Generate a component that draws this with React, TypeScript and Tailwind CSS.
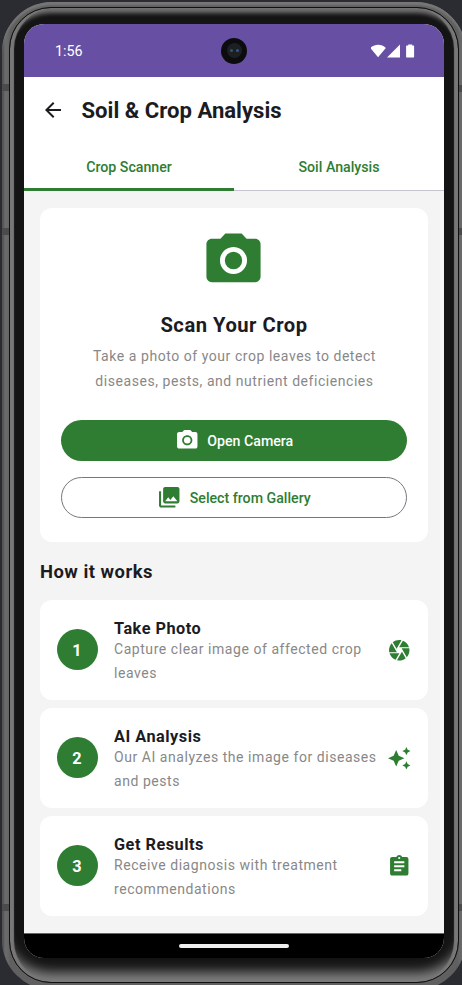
import type { ReactNode } from "react";

const CAMERA_BODY =
  "M9 2L7.17 4H4c-1.1 0-2 .9-2 2v12c0 1.1.9 2 2 2h16c1.1 0 2-.9 2-2V6c0-1.1-.9-2-2-2h-3.17L15 2H9zm3 15c-2.76 0-5-2.24-5-5s2.24-5 5-5 5 2.24 5 5-2.24 5-5 5z";

type IconProps = { className?: string; children: ReactNode };

function Icon({ className = "", children }: IconProps) {
  return (
    <svg viewBox="0 0 24 24" fill="currentColor" className={`shrink-0 ${className}`}>
      {children}
    </svg>
  );
}

function Camera({ className }: { className: string }) {
  return (
    <Icon className={className}>
      <circle cx="12" cy="12" r="3.2" />
      <path d={CAMERA_BODY} />
    </Icon>
  );
}

function StatusBar() {
  return (
    <div className="flex h-[53px] shrink-0 items-center justify-between bg-[#6750a4] pl-[31px] pr-[28px] text-white">
      <span className="w-[42px] pt-[2px] text-[14.3px] leading-none">1:56</span>
      <div className="flex size-[26px] items-center justify-center rounded-full bg-[#0c0c0e]">
        <div className="flex size-[15px] items-center justify-center gap-[3px] rounded-full bg-[#1d1f23]">
          <span className="size-[3px] rounded-full bg-[#2c5960]" />
          <span className="size-[3px] rounded-full bg-[#35558d]" />
        </div>
      </div>
      <svg viewBox="0 0 45 14" className="h-[14px] w-[45px]" fill="white">
        <path d="M-.7 4C3.300-.3 10.800-.3 14.800 4L7.100 13.200z" />
        <path d="M16 13.500L29 .5v13z" />
        <path d="M37.200 1.500V.5h4v1h1.300q.6 0 .6.700v10.600q0 .7-.6.700h-6.800q-.6 0-.6-.7V2.200q0-.7.6-.7z" />
      </svg>
    </div>
  );
}

function AppBar() {
  return (
    <header className="flex h-[67px] shrink-0 items-center bg-white pl-[17px] text-[#1c1b1f]">
      <Icon className="mb-[2px] size-[24px]">
        <path d="M20 11H7.830l5.590-5.590L12 4l-8 8 8 8 1.410-1.410L7.830 13H20v-2z" />
      </Icon>
      <h1 className="ml-[16.500px] whitespace-nowrap text-[22.100px] font-bold leading-none">Soil &amp; Crop Analysis</h1>
    </header>
  );
}

function Tabs() {
  return (
    <nav className="flex h-[47px] shrink-0 bg-white text-[14.200px] font-medium text-[#2e7d32]">
      <div className="flex flex-1 items-center justify-center border-b-[3px] border-[#2e7d32] pt-[4px]">Crop Scanner</div>
      <div className="flex flex-1 items-center justify-center border-b border-[#c8c5d0] pt-[2px]">Soil Analysis</div>
    </nav>
  );
}

function ScanCard() {
  return (
    <section className="flex h-[334px] shrink-0 flex-col items-center rounded-[12px] bg-white px-[21px] pt-[20px]">
      <Camera className="mr-px size-[65px] text-[#2e7d32]" />
      <h2 className="mt-[19px] text-[20.200px] font-bold leading-[26px] tracking-[0.5px] text-[#1c1b1f]">Scan Your Crop</h2>
      <p className="mt-[6px] whitespace-nowrap pl-px text-center text-[14px] leading-[24.500px] tracking-[0.55px] text-[#888888]">
        Take a photo of your crop leaves to detect
        <br />
        diseases, pests, and nutrient deficiencies
      </p>
      <button className="mt-[27px] flex h-[41px] w-full shrink-0 items-center justify-center gap-[8px] rounded-full bg-[#2e7d32] text-[14.200px] font-medium text-white">
        <Camera className="size-[24.500px]" />
        <span className="pt-[2px]">Open Camera</span>
      </button>
      <button className="mt-[16px] flex h-[41px] w-full shrink-0 items-center justify-center gap-[8px] rounded-full border border-[#79747e] text-[14.200px] font-medium text-[#2e7d32]">
        <Icon className="size-[24.500px]">
          <path d="M22 16V4c0-1.100-.9-2-2-2H8c-1.100 0-2 .9-2 2v12c0 1.100.9 2 2 2h12c1.100 0 2-.9 2-2zm-11-4l2.030 2.710L16 11l4 5H8l3-4zM2 6v14c0 1.100.9 2 2 2h14v-2H4V6H2z" />
        </Icon>
        <span className="pt-[2px]">Select from Gallery</span>
      </button>
    </section>
  );
}

type StepProps = { n: number; title: string; lines: [string, string]; icon: ReactNode };

function Step({ n, title, lines, icon }: StepProps) {
  return (
    <article className="flex h-[100px] shrink-0 items-center rounded-[12px] bg-white pl-[16.500px] pr-[17px]">
      <div className="mb-px flex size-[41px] shrink-0 items-center justify-center rounded-full bg-[#2e7d32] pt-[2px] text-[16.300px] font-bold leading-[20px] text-white">
        {n}
      </div>
      <div className="ml-[16.500px] min-w-0 flex-1 whitespace-nowrap pt-[3px]">
        <h3 className="h-[18px] text-[16.300px] font-bold leading-[22px] tracking-[0.5px] text-[#1c1b1f]">{title}</h3>
        <p className="pt-[0.5px] text-[14px] leading-[24.200px] tracking-[0.55px] text-[#888888]">
          {lines[0]}
          <br />
          {lines[1]}
        </p>
      </div>
      <Icon className="size-[24.500px] text-[#2e7d32]">{icon}</Icon>
    </article>
  );
}

const STEPS: StepProps[] = [
  {
    n: 1,
    title: "Take Photo",
    lines: ["Capture clear image of affected crop", "leaves"],
    icon: (
      <path d="M9.400 10.500l4.770-8.260C13.470 2.090 12.750 2 12 2c-2.400 0-4.600.85-6.320 2.250l3.660 6.350.06-.1zM21.540 9c-.92-2.920-3.150-5.260-6-6.340L11.880 9h9.660zm.26 1h-7.490l.29.500 4.760 8.250C21 16.970 22 14.610 22 12c0-.69-.07-1.350-.2-2zM8.540 12l-3.900-6.750C3.010 7.030 2 9.390 2 12c0 .69.07 1.350.2 2h7.490l-1.150-2zm-6.080 3c.92 2.920 3.150 5.260 6 6.340L12.120 15H2.460zm11.270 0l-3.900 6.760c.7.150 1.420.24 2.170.24 2.400 0 4.600-.85 6.320-2.250l-3.660-6.350-.93 1.600z" />
    ),
  },
  {
    n: 2,
    title: "AI Analysis",
    lines: ["Our AI analyzes the image for diseases", "and pests"],
    icon: (
      <path d="M19 9l1.250-2.750L23 5l-2.750-1.250L19 1l-1.250 2.750L15 5l2.750 1.250L19 9zm-7.500.5L9 4 6.500 9.500 1 12l5.500 2.500L9 20l2.500-5.500L17 12l-5.500-2.500zM19 15l-1.250 2.750L15 19l2.750 1.250L19 23l1.250-2.750L23 19l-2.750-1.250L19 15z" />
    ),
  },
  {
    n: 3,
    title: "Get Results",
    lines: ["Receive diagnosis with treatment", "recommendations"],
    icon: (
      <path d="M19 3h-4.180C14.400 1.840 13.300 1 12 1c-1.300 0-2.400.84-2.820 2H5c-1.100 0-2 .9-2 2v14c0 1.100.9 2 2 2h14c1.100 0 2-.9 2-2V5c0-1.100-.9-2-2-2zm-7 0c.55 0 1 .45 1 1s-.45 1-1 1-1-.45-1-1 .45-1 1-1zm2 14H7v-2h7v2zm3-4H7v-2h10v2zm0-4H7V7h10v2z" />
    ),
  },
];

export default function App() {
  return (
    <div className="relative h-[985px] w-[462px] overflow-hidden bg-[#2b2c31] pl-[2px] pt-[2px] font-['Roboto',sans-serif]">
      <div className="h-[988px] w-[464px] rounded-[50px] bg-[linear-gradient(90deg,#424246_0,#6b6b6b_3px,#686868_6px,#606060_8px,#606060_455px,#686868_458px,#6b6b6b_461px,#424246_464px)] px-[7px] pt-[5px] shadow-[inset_0_3px_2px_#777]">
        <div className="h-[976px] rounded-[42px] border border-[#111] bg-[#141414] px-[14px] pt-[16px] shadow-[inset_4px_0_1px_#777,inset_-4px_0_1px_#777,inset_0_8px_4px_-3px_#707070,inset_0_-17px_12px_-7px_#808080]">
          <div className="flex h-[934px] flex-col overflow-hidden rounded-[20px] bg-[#f4f4f4]">
            <StatusBar />
            <AppBar />
            <Tabs />
            <main className="flex flex-1 flex-col px-[16px] pt-[17px]">
              <ScanCard />
              <h2 className="mt-[18px] mb-[16px] h-[24px] text-[18.400px] font-bold leading-[24px] tracking-[0.5px] text-[#1c1b1f]">
                How it works
              </h2>
              <div className="flex flex-col gap-[8px]">
                {STEPS.map((step) => (
                  <Step key={step.n} {...step} />
                ))}
              </div>
            </main>
            <div className="flex h-[25px] shrink-0 items-center justify-center border-t border-[#666] bg-black">
              <div className="h-[4px] w-[110px] rounded-full bg-[#eeeeee]" />
            </div>
          </div>
        </div>
      </div>
      {/* Antenna bands on the metal frame */}
      <span className="absolute left-[2px] top-[84px] h-[7px] w-[7px] bg-[#4b4b4b]" />
      <span className="absolute left-[2px] top-[228px] h-[7px] w-[7px] bg-[#4b4b4b]" />
      <span className="absolute left-[2px] top-[904px] h-[7px] w-[7px] bg-[#4b4b4b]" />
      <span className="absolute right-0 top-[85px] h-[7px] w-[3px] bg-[#4b4b4b]" />
      <span className="absolute right-0 top-[228px] h-[7px] w-[3px] bg-[#4b4b4b]" />
      <span className="absolute right-0 top-[904px] h-[7px] w-[3px] bg-[#4b4b4b]" />
    </div>
  );
}
